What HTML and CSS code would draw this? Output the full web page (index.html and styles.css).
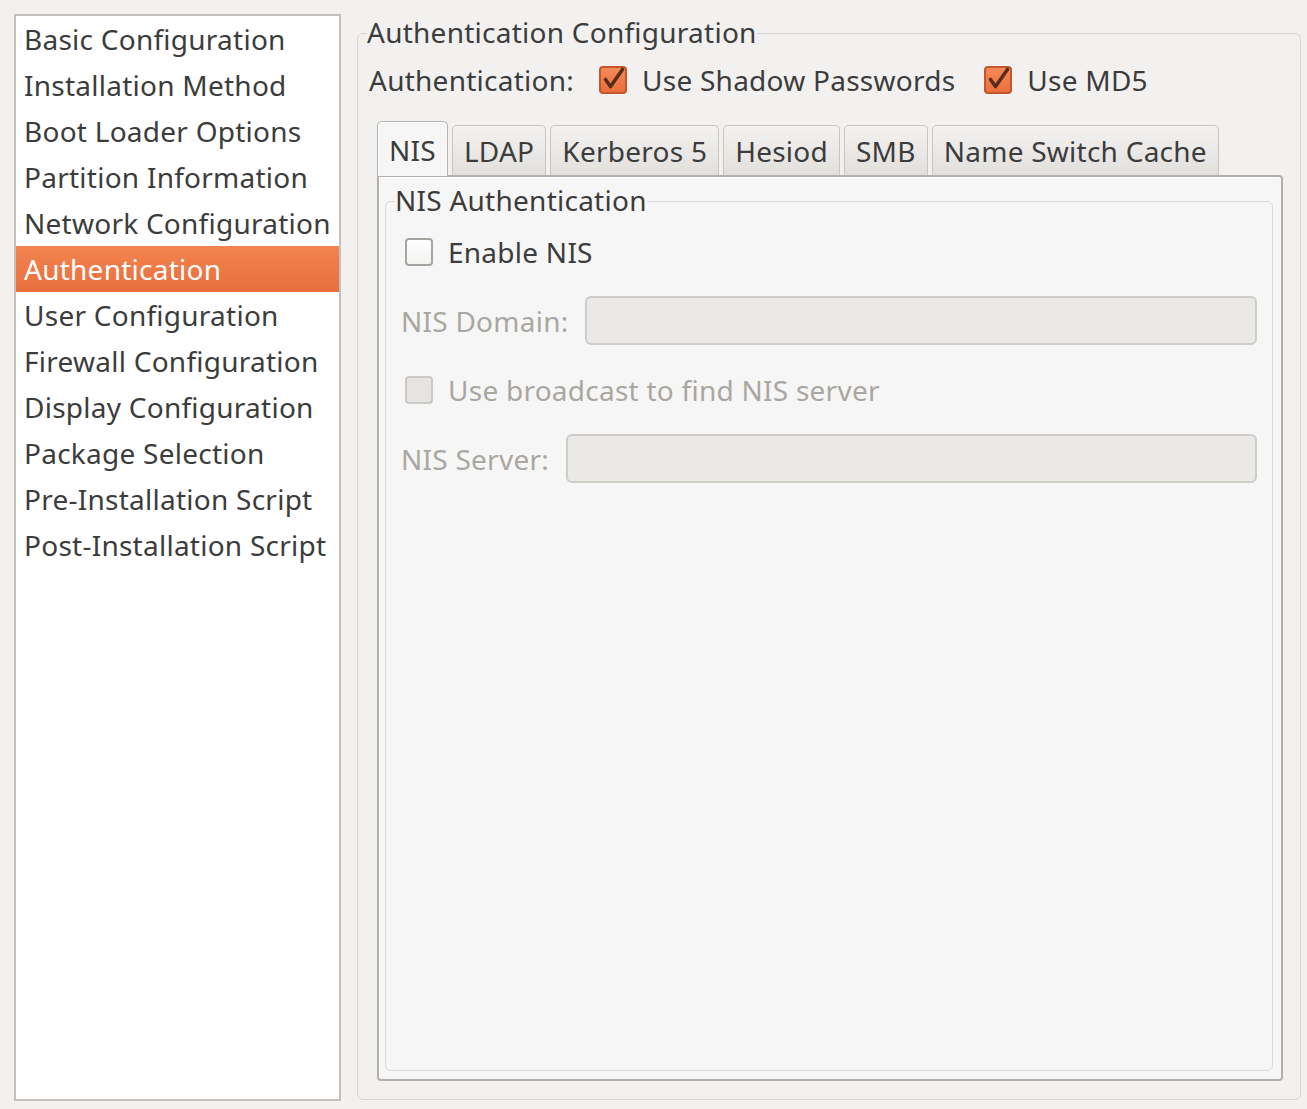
FILE: index.html
```html
<!DOCTYPE html>
<html>
<head>
<meta charset="utf-8">
<title>Authentication Configuration</title>
<link rel="stylesheet" href="styles.css">
</head>
<body>
<div class="window">
  <ul class="sidebar">
    <li>Basic Configuration</li>
    <li>Installation Method</li>
    <li>Boot Loader Options</li>
    <li>Partition Information</li>
    <li>Network Configuration</li>
    <li class="selected">Authentication</li>
    <li>User Configuration</li>
    <li>Firewall Configuration</li>
    <li>Display Configuration</li>
    <li>Package Selection</li>
    <li>Pre-Installation Script</li>
    <li>Post-Installation Script</li>
  </ul>
  <fieldset class="frame outer">
    <legend>Authentication Configuration</legend>
    <div class="auth-row">
      <span class="auth-label">Authentication:</span>
      <label class="check">
        <span class="box checked"><svg viewBox="0 0 28 28" width="28" height="28"><path d="M6.5 13.5 L11.5 20.5 L23.5 3.5" fill="none" stroke="#5a2d1b" stroke-width="3.6" stroke-linecap="round" stroke-linejoin="round"/></svg></span>
        <span>Use Shadow Passwords</span>
      </label>
      <label class="check">
        <span class="box checked"><svg viewBox="0 0 28 28" width="28" height="28"><path d="M6.5 13.5 L11.5 20.5 L23.5 3.5" fill="none" stroke="#5a2d1b" stroke-width="3.6" stroke-linecap="round" stroke-linejoin="round"/></svg></span>
        <span>Use MD5</span>
      </label>
    </div>
    <div class="notebook">
      <div class="tabs">
        <div class="tab active">NIS</div>
        <div class="tab">LDAP</div>
        <div class="tab">Kerberos 5</div>
        <div class="tab">Hesiod</div>
        <div class="tab">SMB</div>
        <div class="tab">Name Switch Cache</div>
      </div>
      <div class="panel">
        <fieldset class="frame inner">
          <legend>NIS Authentication</legend>
          <div class="inner-body">
            <label class="check row-check">
              <span class="box"></span>
              <span>Enable NIS</span>
            </label>
            <div class="field-row">
              <span class="field-label">NIS Domain:</span>
              <span class="entry"></span>
            </div>
            <label class="check row-check disabled">
              <span class="box"></span>
              <span>Use broadcast to find NIS server</span>
            </label>
            <div class="field-row">
              <span class="field-label">NIS Server:</span>
              <span class="entry"></span>
            </div>
          </div>
        </fieldset>
      </div>
    </div>
  </fieldset>
</div>
</body>
</html>
```

FILE: styles.css
```css
* { box-sizing: border-box; }

html, body {
  margin: 0;
  padding: 0;
  background: #f2f1f0;
}

body {
  font-family: "Noto Sans", "Open Sans", sans-serif;
  font-size: 28px;
  letter-spacing: 0.25px;
  color: #3c3c3c;
}

.window {
  display: flex;
  gap: 16px;
  height: 1109px;
  padding: 14px 6px 8px 14px;
}

/* ---------- sidebar ---------- */
.sidebar {
  list-style: none;
  margin: 0;
  padding: 0;
  width: 327px;
  flex: none;
  background: #ffffff;
  border: 2px solid #c4c1bc;
}

.sidebar li {
  height: 46px;
  line-height: 46px;
  padding-left: 8px;
  white-space: nowrap;
}

.sidebar li.selected {
  background: linear-gradient(#f3844f, #e86e3d);
  color: #ffffff;
}

/* ---------- frames ---------- */
.frame {
  margin: 0;
  padding: 0;
  min-width: 0;
  border: 1px solid #d9d6d2;
  border-radius: 6px;
}

.frame > legend {
  padding: 0;
  margin-left: 9px;
  line-height: 28px;
  height: 30px;
}

.outer {
  flex: 1;
  margin: 4px 0 1px 0;
  display: flex;
  flex-direction: column;
}

/* ---------- auth row ---------- */
.auth-row {
  display: flex;
  align-items: center;
  height: 40px;
  margin: 12px 0 0 11px;
}

.auth-label {
  margin-right: 25px;
}

.check {
  display: flex;
  align-items: center;
  gap: 15px;
  margin-right: 29px;
}

.box {
  width: 28px;
  height: 28px;
  flex: none;
  border: 2px solid #a8a5a0;
  border-radius: 4px;
  background: linear-gradient(#ffffff, #f4f3f2);
  position: relative;
}

.box.checked {
  border-color: #c3562a;
  background: linear-gradient(#f58a58, #ec6e3c);
}

.box svg {
  position: absolute;
  left: -2px;
  top: -2px;
}

/* ---------- notebook ---------- */
.notebook {
  flex: 1;
  display: flex;
  flex-direction: column;
  margin: 21px 17px 18px 19px;
}

.tabs {
  display: flex;
  align-items: flex-end;
  gap: 4px;
  height: 54px;
}

.tab {
  height: 50px;
  line-height: 50px;
  padding: 0 11px;
  border: 1px solid #c8c5c1;
  border-bottom: none;
  border-radius: 5px 5px 0 0;
  background: linear-gradient(#f3f2f1, #e2e0dd);
  white-space: nowrap;
}

.tab.active {
  height: 55px;
  line-height: 56px;
  margin-bottom: -1px;
  position: relative;
  z-index: 1;
  border-color: #b7b4af;
  background: #f6f6f6;
  box-shadow: inset 1px 1px 0 #ffffff;
}

.panel {
  flex: 1;
  display: flex;
  flex-direction: column;
  background: #f6f6f6;
  border: 2px solid #b3b0ab;
  border-radius: 0 4px 4px 4px;
  box-shadow: inset 1px 1px 0 #ffffff;
  padding: 9px 8px 8px 6px;
}

.inner {
  flex: 1;
  border-color: #dcd9d5;
}

.inner-body {
  display: flex;
  flex-direction: column;
  gap: 24px;
  padding: 15px 15px 0 15px;
}

.row-check {
  height: 41px;
  margin-left: 4px;
}

.field-row {
  display: flex;
  align-items: center;
  gap: 17px;
  height: 49px;
}

.field-label {
  color: #aaa6a1;
  white-space: nowrap;
}

.entry {
  flex: 1;
  height: 49px;
  background: #ebe9e7;
  border: 2px solid #cfccc8;
  border-radius: 6px;
}

.check.disabled {
  color: #aaa6a1;
}

.check.disabled .box {
  background: #e6e4e2;
  border-color: #cdcac6;
}
```
